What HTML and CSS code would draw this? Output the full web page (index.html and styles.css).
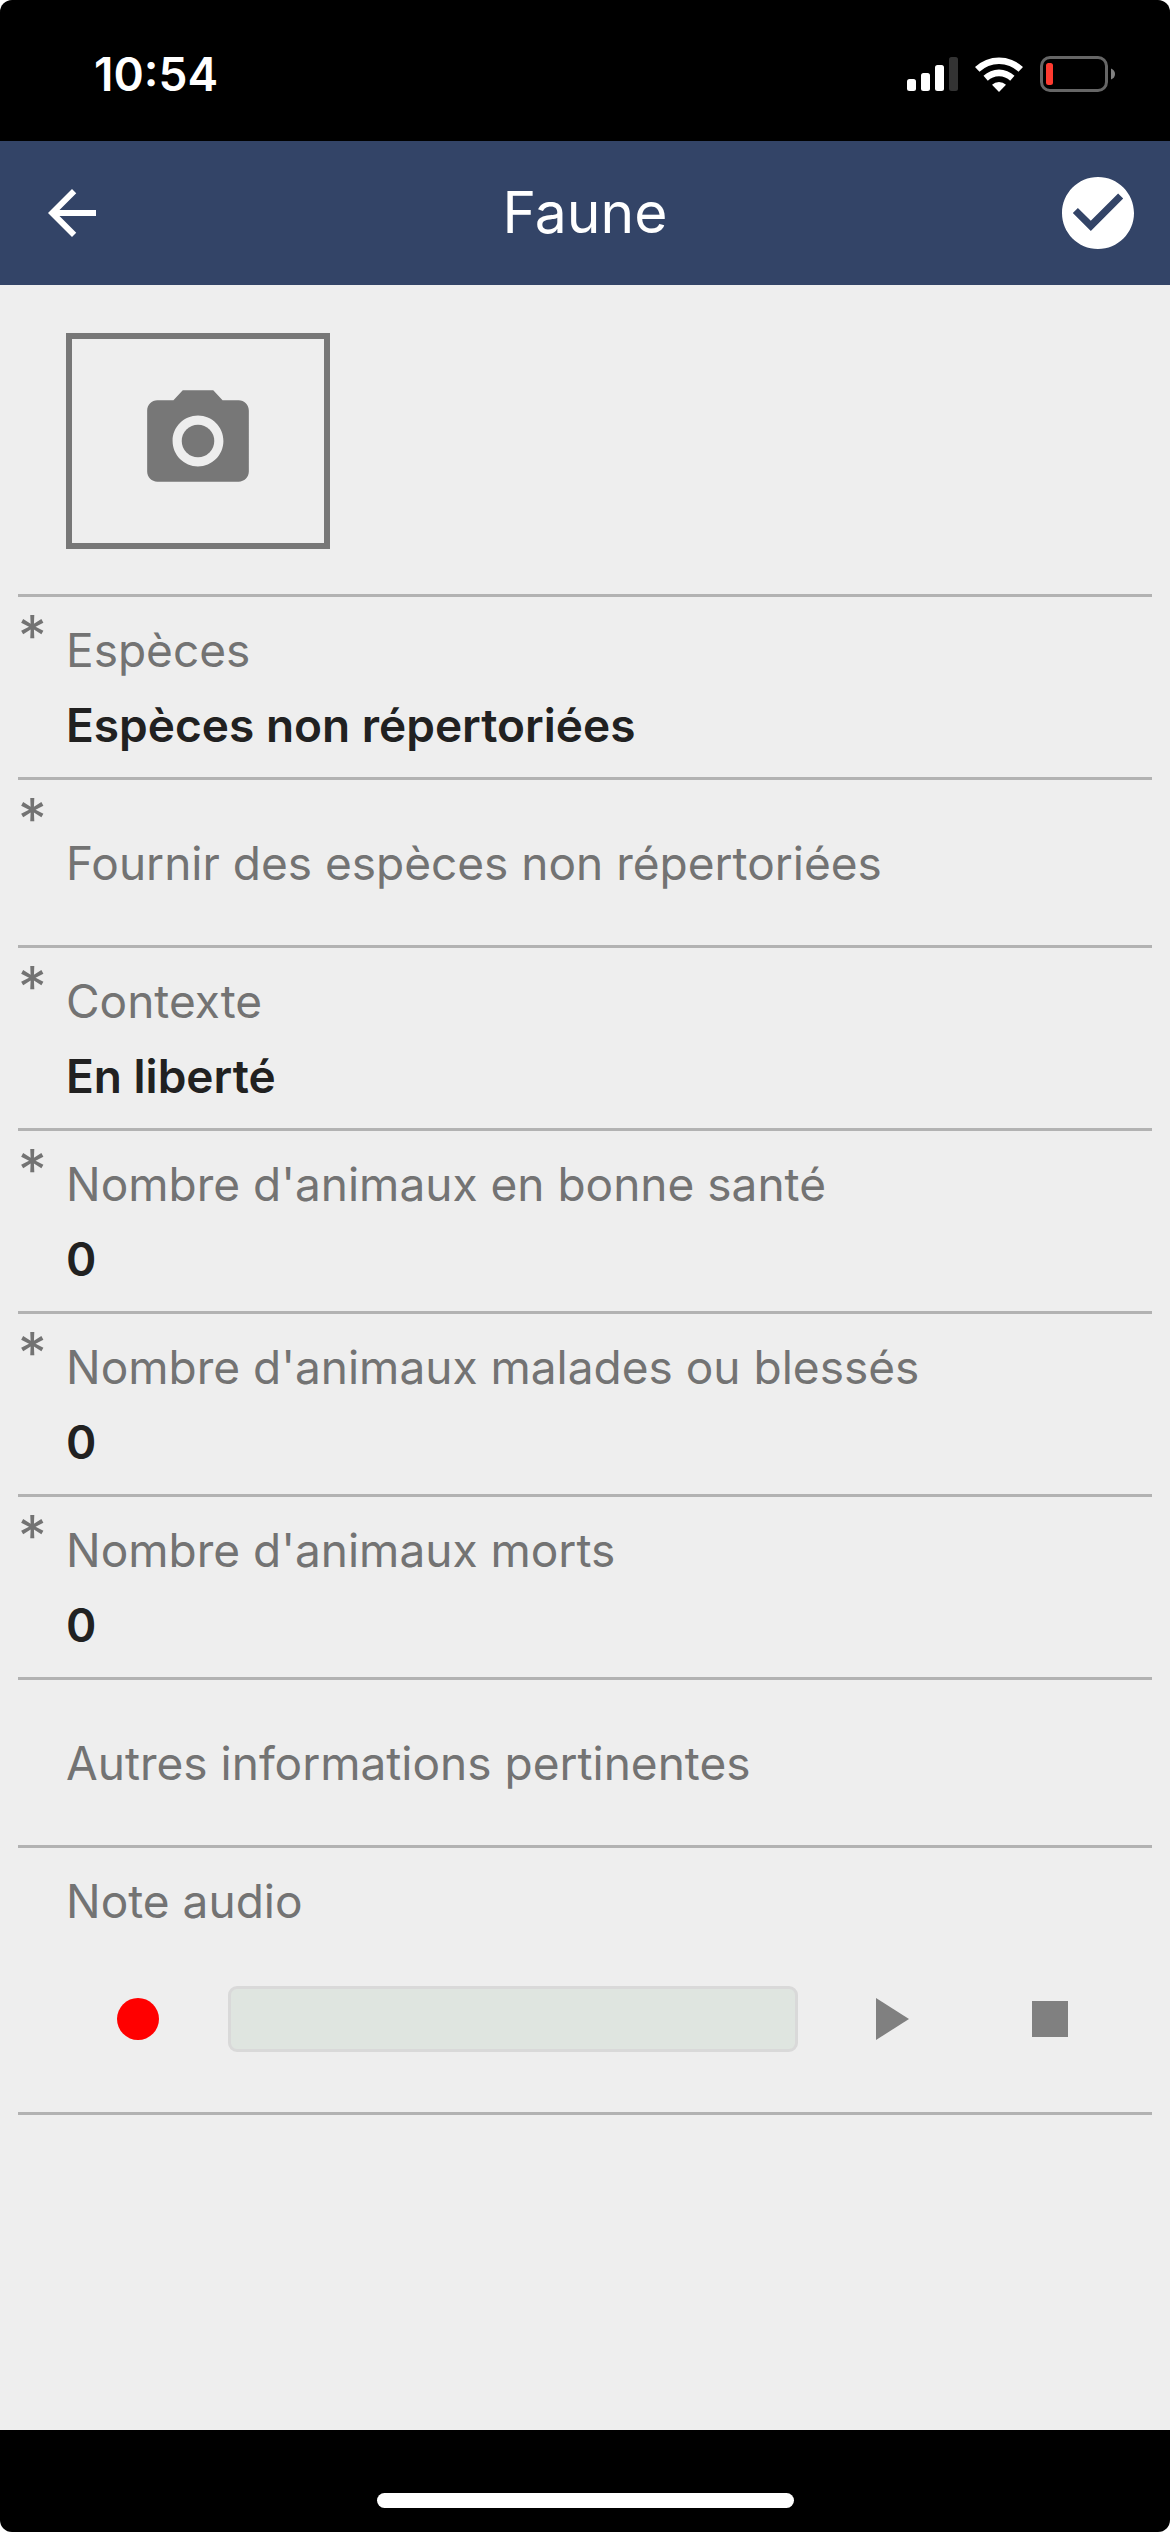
FILE: index.html
```html
<!DOCTYPE html>
<html lang="fr">
<head>
<meta charset="utf-8">
<meta name="viewport" content="width=device-width, initial-scale=1">
<title>Faune</title>
<link rel="stylesheet" href="styles.css">
</head>
<body>
<div class="screen">
  <div class="status">
    <span class="time">10:54</span>
    <div class="indicators">
      <svg width="51" height="34" viewBox="0 0 51 34" aria-hidden="true">
        <rect x="0" y="22" width="9" height="12" rx="2.5" fill="#fff"/>
        <rect x="14" y="16" width="9" height="18" rx="2.5" fill="#fff"/>
        <rect x="28" y="8" width="9" height="26" rx="2.5" fill="#fff"/>
        <rect x="42" y="0" width="9" height="34" rx="2.5" fill="#333"/>
      </svg>
      <svg width="48" height="36" viewBox="0 0 48 36" fill="#fff" aria-hidden="true">
        <path d="M0 11A35 35 0 0 1 48 11L43.500 15.800A28 28 0 0 0 4.500 15.800Z"/>
        <path d="M8.500 19.800A22.500 22.500 0 0 1 39.500 19.800L35.200 24.800A16 16 0 0 0 12.800 24.800Z"/>
        <path d="M17 28.800A10 10 0 0 1 31 28.800L24 36Z"/>
      </svg>
      <svg width="75" height="36" viewBox="0 0 75 36" aria-hidden="true">
        <rect x="1.5" y="1.5" width="65" height="33" rx="8.5" fill="none" stroke="#666" stroke-width="3"/>
        <rect x="6" y="7" width="7" height="22" rx="2.5" fill="#ff3b30"/>
        <path d="M71 12.500Q75 14 75 18Q75 22 71 23.500Z" fill="#808080"/>
      </svg>
    </div>
  </div>

  <header class="toolbar">
    <button class="icon-button" type="button" aria-label="Retour">
      <svg width="72" height="72" viewBox="0 0 24 24" fill="#fff"><path d="M20 11H7.830l5.590-5.590L12 4l-8 8 8 8 1.410-1.410L7.830 13H20v-2z"/></svg>
    </button>
    <h1 class="title">Faune</h1>
    <button class="icon-button" type="submit" form="fauna" aria-label="Valider">
      <svg width="72" height="72" viewBox="2 2 20 20" fill="#fff"><path d="M12 2C6.480 2 2 6.480 2 12s4.480 10 10 10 10-4.480 10-10S17.520 2 12 2zm-2 15l-5-5 1.410-1.410L10 14.170l7.590-7.590L19 8l-9 9z"/></svg>
    </button>
  </header>

  <main class="content">
    <form id="fauna" class="form">
      <div class="photo-row">
        <button class="photo" type="button" aria-label="Ajouter une photo">
          <svg width="122" height="122" viewBox="0 0 24 24" fill="#777"><circle cx="12" cy="12" r="3.200"/><path d="M9 2L7.170 4H4c-1.100 0-2 .9-2 2v12c0 1.100.9 2 2 2h16c1.100 0 2-.9 2-2V6c0-1.100-.9-2-2-2h-3.170L15 2H9zm3 15c-2.760 0-5-2.240-5-5s2.240-5 5-5 5 2.240 5 5-2.240 5-5 5z"/></svg>
        </button>
      </div>

      <div class="row">
        <span class="required">*</span>
        <div class="field">
          <label class="label" for="species">Espèces</label>
          <select class="value" id="species"><option>Espèces non répertoriées</option></select>
        </div>
      </div>
      <div class="row">
        <span class="required">*</span>
        <div class="field field-single">
          <input class="entry" type="text" placeholder="Fournir des espèces non répertoriées" aria-label="Fournir des espèces non répertoriées">
        </div>
      </div>
      <div class="row">
        <span class="required">*</span>
        <div class="field">
          <label class="label" for="context">Contexte</label>
          <select class="value" id="context"><option>En liberté</option></select>
        </div>
      </div>
      <div class="row">
        <span class="required">*</span>
        <div class="field">
          <label class="label" for="healthy">Nombre d'animaux en bonne santé</label>
          <input class="value" id="healthy" type="text" inputmode="numeric" value="0">
        </div>
      </div>
      <div class="row">
        <span class="required">*</span>
        <div class="field">
          <label class="label" for="sick">Nombre d'animaux malades ou blessés</label>
          <input class="value" id="sick" type="text" inputmode="numeric" value="0">
        </div>
      </div>
      <div class="row">
        <span class="required">*</span>
        <div class="field">
          <label class="label" for="dead">Nombre d'animaux morts</label>
          <input class="value" id="dead" type="text" inputmode="numeric" value="0">
        </div>
      </div>
      <div class="row">
        <span class="required"></span>
        <div class="field field-single">
          <input class="entry" type="text" placeholder="Autres informations pertinentes" aria-label="Autres informations pertinentes">
        </div>
      </div>
      <div class="audio-row">
        <label class="label audio-label" for="audio">Note audio</label>
        <div class="player">
          <button class="icon-button" type="button" aria-label="Enregistrer">
            <svg width="42" height="42" viewBox="0 0 42 42"><circle cx="21" cy="21" r="21" fill="#f00"/></svg>
          </button>
          <progress class="track" id="audio" value="0" max="100"></progress>
          <button class="icon-button" type="button" aria-label="Lire">
            <svg width="36" height="42" viewBox="0 0 36 42"><path d="M0 0L33 21L0 42Z" fill="#808080"/></svg>
          </button>
          <button class="icon-button" type="button" aria-label="Arrêter">
            <svg width="36" height="36" viewBox="0 0 36 36"><rect width="36" height="36" fill="#808080"/></svg>
          </button>
        </div>
      </div>
    </form>
  </main>

  <div class="home-bar"><span class="home-indicator"></span></div>
</div>
</body>
</html>
```

FILE: styles.css
```css
* {
  box-sizing: border-box;
}

body {
  margin: 0;
  background: #fff;
  font-family: Inter, "Liberation Sans", sans-serif;
  font-size: 46px;
  line-height: 56px;
}

svg {
  display: block;
}

button,
input,
select,
progress {
  appearance: none;
  margin: 0;
  padding: 0;
  border: 0;
  border-radius: 0;
  background: none;
  font: inherit;
}

.screen {
  display: flex;
  flex-direction: column;
  min-height: 100vh;
  border-radius: 12px;
  overflow: hidden;
  background: #eee;
}

.status {
  display: flex;
  justify-content: space-between;
  align-items: center;
  padding: 46px 55px 39px 94px;
  background: #000;
  color: #fff;
}

.time {
  font-weight: 600;
}

.indicators {
  display: flex;
  align-items: center;
  gap: 17px;
}

.toolbar {
  display: grid;
  grid-template-columns: 72px 1fr 72px;
  align-items: center;
  padding: 36px;
  background: #334467;
  color: #fff;
}

.title {
  margin: 0;
  font-size: 57px;
  font-weight: 400;
  line-height: 72px;
  text-align: center;
}

.icon-button {
  display: flex;
  justify-content: center;
  align-items: center;
}

.content {
  flex: 1;
  padding: 0 18px;
}

.photo-row {
  padding: 48px 48px 45px;
  border-bottom: 3px solid #b2b2b2;
}

.photo {
  display: flex;
  justify-content: center;
  align-items: center;
  width: 264px;
  height: 216px;
  border: 6px solid #777;
}

.row {
  display: grid;
  grid-template-columns: 48px 1fr;
  border-bottom: 3px solid #b2b2b2;
}

.required {
  padding-top: 12px;
  color: #737373;
  font-size: 57px;
}

.field {
  display: flex;
  flex-direction: column;
  gap: 19px;
  padding: 25px 0 24px;
}

.field-single {
  padding: 55px 0 54px;
}

.label {
  color: #737373;
}

.value,
.entry {
  width: 100%;
  height: 56px;
  color: #212121;
  line-height: 56px;
}

.value {
  font-weight: 600;
}

.entry::placeholder {
  color: #737373;
  opacity: 1;
}

.audio-row {
  display: flex;
  flex-direction: column;
  gap: 57px;
  padding: 25px 0 60px;
  border-bottom: 3px solid #b2b2b2;
}

.audio-label {
  padding-left: 48px;
}

.player {
  display: grid;
  grid-template-columns: 180px 1fr 156px 156px;
  align-items: center;
  padding: 0 24px 0 30px;
}

.track {
  width: calc(100% - 18px);
  height: 66px;
  border: 3px solid #d9d9d9;
  border-radius: 9px;
  background: #dfe5e0;
}

.track::-webkit-progress-bar {
  background: none;
}

.home-bar {
  display: flex;
  justify-content: center;
  padding: 63px 0 24px;
  background: #000;
}

.home-indicator {
  width: 417px;
  height: 15px;
  border-radius: 8px;
  background: #fff;
}
```
